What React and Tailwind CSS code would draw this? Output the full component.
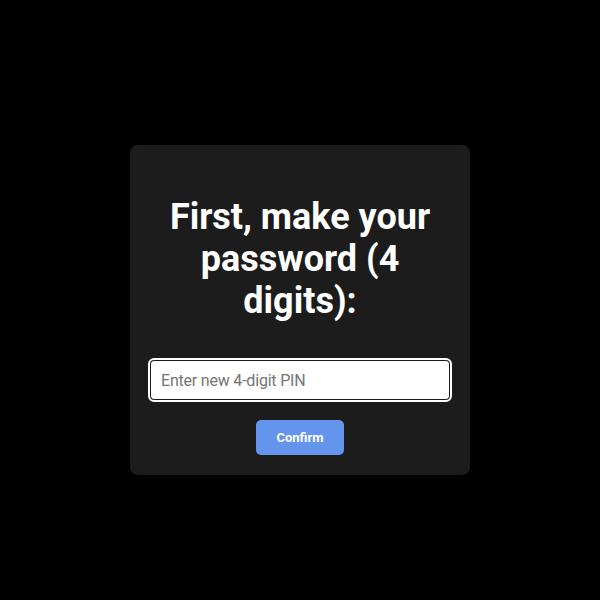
import React, { useState } from 'react';

const App = () => {
    const [pin, setPin] = useState('');

    return (
        <div className="min-h-screen bg-black flex justify-center pt-[145px]" style={{ fontFamily: 'Roboto, "Noto Sans", sans-serif' }}>
            <div className="w-[340px] h-fit bg-[#1c1c1c] rounded-lg px-5 pt-[51px] pb-5 flex flex-col items-center">
                <h1 className="text-white font-bold text-[36px] leading-[42px] text-center">
                    First, make your password (4 digits):
                </h1>

                <input
                    type="password"
                    inputMode="numeric"
                    maxLength={4}
                    autoFocus
                    value={pin}
                    onChange={(e) => setPin(e.target.value)}
                    placeholder="Enter new 4-digit PIN"
                    className="mt-[38px] w-full h-10 bg-white text-black text-base tracking-[-0.2px] px-[10px] rounded border border-[#1c1c1c] outline-2 outline-white placeholder:text-[#757575] caret-black"
                />

                <button className="mt-5 w-[88px] h-[35px] rounded-[5px] bg-[#6495ED] text-white text-[13px] font-bold">
                    Confirm
                </button>
            </div>
        </div>
    );
};

export default App;
